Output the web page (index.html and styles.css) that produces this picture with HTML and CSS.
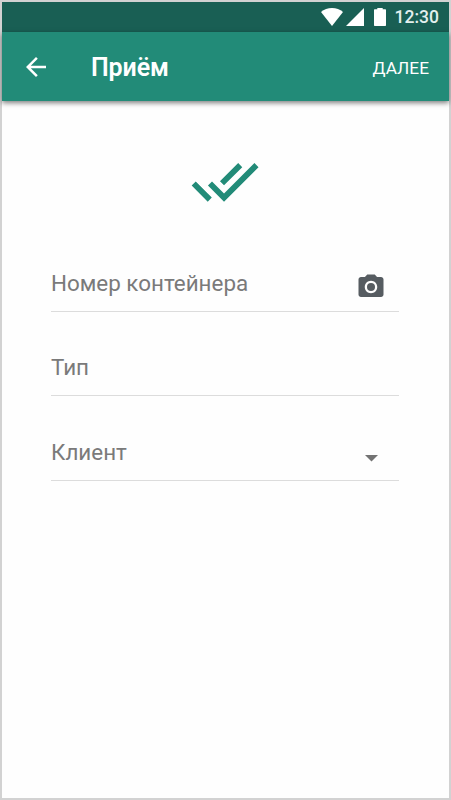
FILE: index.html
```html
<!DOCTYPE html>
<html lang="ru">

<head>
    <meta charset="UTF-8">
    <meta name="viewport" content="width=device-width, initial-scale=1.0">
    <title>Приём</title>
    <link rel="stylesheet" href="styles.css">
</head>

<body>
    <div class="screen">
        <div class="status-bar">
            <svg class="status-bar__wifi" width="22" height="18" viewBox="0 0 22 18">
                <path d="M11 18L0 3.9C3 1.4 6.8 0 11 0s8 1.4 11 3.9z" />
            </svg>
            <svg class="status-bar__signal" width="18" height="18" viewBox="0 0 18 18">
                <path d="M0 18L18 0v18z" />
            </svg>
            <svg class="status-bar__battery" width="12" height="18" viewBox="0 0 12 18">
                <path d="M.7 1.2h2.6V0h5.4v1.2h2.6a.7.7 0 0 1 .7.7v15.4a.7.7 0 0 1-.7.7H.7a.7.7 0 0 1-.7-.7V1.9a.7.7 0 0 1 .7-.7z" />
            </svg>
            <span class="status-bar__time">12:30</span>
        </div>

        <header class="app-bar">
            <button class="app-bar__back" type="button" aria-label="Назад">
                <svg width="30" height="30" viewBox="0 0 24 24">
                    <path d="M20 11H7.83l5.59-5.59L12 4l-8 8 8 8 1.41-1.41L7.83 13H20v-2z" />
                </svg>
            </button>
            <h1 class="app-bar__title">Приём</h1>
            <button class="app-bar__next" type="button">ДАЛЕЕ</button>
        </header>

        <main class="content">
            <svg class="logo" width="69" height="69" viewBox="0 0 24 24">
                <path d="M18 7l-1.41-1.41-6.34 6.34 1.41 1.41L18 7zm4.24-1.41L11.66 16.17 7.48 12l-1.41 1.41L11.66 19l12-12-1.42-1.41zM.41 13.41L6 19l1.41-1.41L1.83 12 .41 13.41z" />
            </svg>

            <form class="form">
                <div class="field">
                    <span class="field__label">Номер контейнера</span>
                    <svg class="field__camera" width="30" height="30" viewBox="0 0 24 24">
                        <circle cx="12" cy="12" r="3.2" />
                        <path d="M9 2L7.17 4H4c-1.1 0-2 .9-2 2v12c0 1.1.9 2 2 2h16c1.1 0 2-.9 2-2V6c0-1.1-.9-2-2-2h-3.17L15 2H9zm3 15c-2.76 0-5-2.24-5-5s2.24-5 5-5 5 2.24 5 5-2.24 5-5 5z" />
                    </svg>
                </div>
                <div class="field">
                    <span class="field__label">Тип</span>
                </div>
                <div class="field">
                    <span class="field__label">Клиент</span>
                    <svg class="field__arrow" width="13" height="7" viewBox="0 0 13 7">
                        <path d="M0 0h13L6.5 6.5z" />
                    </svg>
                </div>
            </form>
        </main>
    </div>
</body>

</html>
```

FILE: styles.css
```css
* {
    box-sizing: border-box;
}

body {
    margin: 0;
    font-family: Roboto, "Liberation Sans", sans-serif;
}

svg {
    display: block;
    flex: none;
    fill: currentColor;
}

button {
    padding: 0;
    border: 0;
    background: none;
    color: inherit;
    font: inherit;
}

.screen {
    display: flex;
    flex-direction: column;
    height: 800px;
    border: 2px solid #d2d2d2;
    background: #fefefe;
}

.status-bar {
    display: flex;
    align-items: center;
    justify-content: flex-end;
    height: 30px;
    padding: 0 10px 0 0;
    background: #195f54;
    color: #fff;
}

.status-bar__signal {
    margin-left: 3px;
}

.status-bar__battery {
    margin-left: 10px;
}

.status-bar__time {
    margin-left: 9px;
    color: #e3f0ee;
    font-size: 17.5px;
    font-weight: 500;
    line-height: 32px;
}

.app-bar {
    display: flex;
    align-items: center;
    height: 69px;
    padding: 0 20px 0 19px;
    background: #228b78;
    box-shadow: 0 2px 5px rgba(0, 0, 0, 0.5);
    color: #fff;
}

.app-bar__title {
    flex: 1;
    margin: 0 0 0 40px;
    padding-top: 2px;
    font-size: 25px;
    font-weight: 600;
    letter-spacing: -0.1px;
}

.app-bar__next {
    padding-top: 3px;
    font-size: 17.3px;
}

.content {
    padding: 46px 50px 0 49px;
}

.logo {
    margin: 0 auto;
    color: #228b78;
    transform: translateX(-0.5px);
}

.form {
    margin-top: 11px;
}

.field {
    display: flex;
    align-items: flex-end;
    justify-content: space-between;
    height: 84.5px;
    border-bottom: 1px solid #dcdcdc;
}

.field__label {
    padding-bottom: 15px;
    color: #7a7a7a;
    font-size: 22.4px;
    line-height: 26px;
}

.field__camera {
    margin: 0 13px 9px 0;
    color: #565c61;
}

.field__arrow {
    margin: 0 21px 18px 0;
    color: #737373;
}
```
